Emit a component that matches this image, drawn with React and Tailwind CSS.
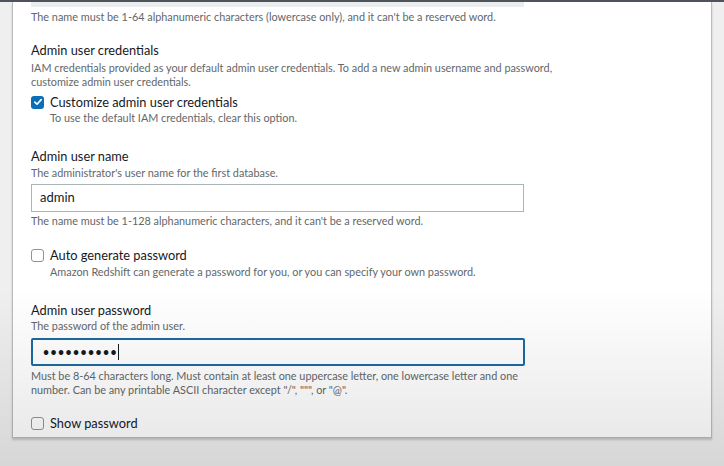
import React from 'react';

function CheckBox({ checked }) {
  return checked ? (
    <span className="flex h-[13px] w-[13px] shrink-0 items-center justify-center rounded-[3px] bg-[#0a6fb5]">
      <svg viewBox="0 0 12 12" className="h-[10px] w-[10px]">
        <path d="M2.2 6.2 L4.8 8.7 L9.8 3.2" fill="none" stroke="#fff" strokeWidth="2" strokeLinecap="round" strokeLinejoin="round" />
      </svg>
    </span>
  ) : (
    <span className="h-[13px] w-[13px] shrink-0 rounded-[3px] border border-[#8d9696] bg-white" />
  );
}

function Help({ children, className = '' }) {
  return <p className={`text-[10.85px] leading-[14px] text-[#62676a] ${className}`}>{children}</p>;
}

function Label({ children, className = '' }) {
  return <p className={`text-[12.8px] leading-[18px] text-[#16191f] ${className}`}>{children}</p>;
}

export default function App() {
  return (
    <div className="relative h-[466px] w-[724px] overflow-hidden bg-[#efefef]" style={{ fontFamily: 'Lato, "Open Sans", sans-serif' }}>
      <div className="h-[2px] bg-[#4f545a]" />
      <div className="ml-[12px] h-[436px] w-[700px] border-x border-b border-[#b9bdbd] bg-white shadow-[0_2px_2px_rgba(0,0,0,0.18)]">
        <div className="pl-[18px]">
          {/* end of cluster identifier field */}
          <div className="h-[5px] w-[493px] bg-[#eaeded]" />
          <Help className="mt-[3px]">The name must be 1-64 alphanumeric characters (lowercase only), and it can't be a reserved word.</Help>

          {/* Admin user credentials */}
          <Label className="mt-[17px]">Admin user credentials</Label>
          <Help className="mt-[2px] w-[540px]">
            IAM credentials provided as your default admin user credentials. To add a new admin username and password, customize admin user credentials.
          </Help>
          <div className="mt-[4px] flex items-center gap-[6px]">
            <CheckBox checked />
            <Label>Customize admin user credentials</Label>
          </div>
          <Help className="pl-[19px]">To use the default IAM credentials, clear this option.</Help>

          {/* Admin user name */}
          <Label className="mt-[22px]">Admin user name</Label>
          <Help className="mt-[1px]">The administrator's user name for the first database.</Help>
          <div className="mt-[4px] flex h-[28px] w-[493px] items-center border border-[#aab7b8] bg-white px-[8px] text-[13px] text-[#16191f]">
            admin
          </div>
          <Help className="mt-[2px]">The name must be 1-128 alphanumeric characters, and it can't be a reserved word.</Help>

          <div className="mt-[18px] flex items-center gap-[6px]">
            <CheckBox />
            <Label>Auto generate password</Label>
          </div>
          <Help className="mt-[1px] pl-[19px]">Amazon Redshift can generate a password for you, or you can specify your own password.</Help>

          {/* Admin user password */}
          <Label className="mt-[22px]">Admin user password</Label>
          <Help>The password of the admin user.</Help>
          <div className="mt-[5px] flex h-[28px] w-[494px] items-center rounded-[2px] border-2 border-[#1b6aa0] bg-white pl-[10px]">
            <span className="text-[10.5px] font-bold leading-none tracking-[1.4px] text-[#16191f]">••••••••••</span>
            <span className="h-[16px] w-[1px] bg-[#16191f]" />
          </div>
          <Help className="mt-[3px] w-[500px]">
            Must be 8-64 characters long. Must contain at least one uppercase letter, one lowercase letter and one number. Can be any printable ASCII character except "/", """, or "@".
          </Help>

          <div className="mt-[17px] flex items-center gap-[6px]">
            <CheckBox />
            <Label>Show password</Label>
          </div>
        </div>
      </div>
      {/* video vignette shading toward the bottom */}
      <div className="pointer-events-none absolute inset-0 bg-[linear-gradient(to_bottom,rgba(0,0,0,0)_0%,rgba(0,0,0,0)_62%,rgba(0,0,0,0.1)_100%)]" />
    </div>
  );
}
